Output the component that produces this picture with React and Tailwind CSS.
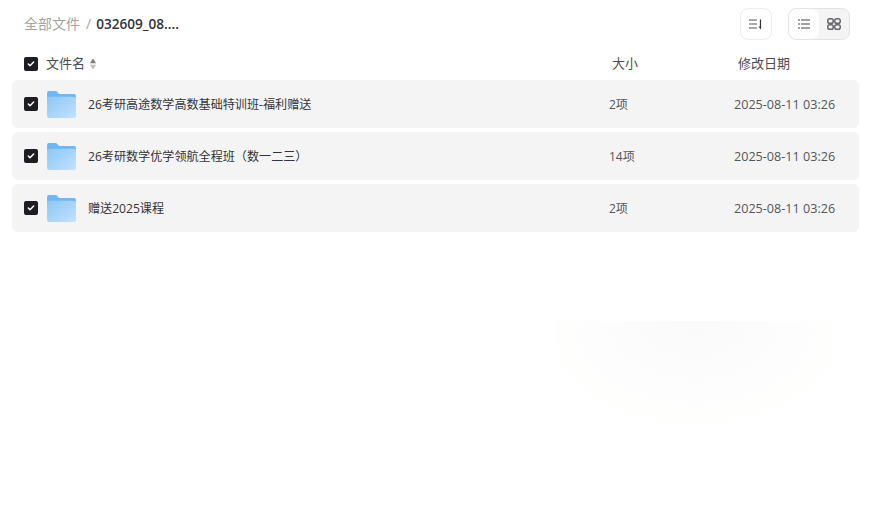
import { Check } from "lucide-react";

const files = [
  { name: "26考研高途数学高数基础特训班-福利赠送", size: "2项" },
  { name: "26考研数学优学领航全程班（数一二三）", size: "14项" },
  { name: "赠送2025课程", size: "2项" },
];

const font = "font-['Open_Sans','Noto_Sans_CJK_SC',sans-serif]";

function CheckBox() {
  return (
    <span className="w-[14px] h-[14px] rounded-[2px] bg-[#1c1c22] flex items-center justify-center shrink-0">
      <Check size={8} strokeWidth={4.500} color="#fff" />
    </span>
  );
}

function FolderIcon() {
  return (
    <svg width="29" height="27" viewBox="0 0 30 28" className="shrink-0 block">
      <defs>
        <linearGradient id="folderFront" x1="0" y1="0" x2="1" y2="1">
          <stop offset="0" stopColor="#8cc6f8" />
          <stop offset="1" stopColor="#c2e2fc" />
        </linearGradient>
      </defs>
      <path d="M0 2a2 2 0 0 1 2-2h7.500l3 3H28a2 2 0 0 1 2 2v4H0z" fill="#6fb6f2" />
      <path d="M0 6h28a2 2 0 0 1 2 2v18a2 2 0 0 1-2 2H2a2 2 0 0 1-2-2z" fill="url(#folderFront)" />
      <rect x="22" y="9" width="3" height="2" fill="#a0d0f6" />
    </svg>
  );
}

function SortIcon() {
  return (
    <svg width="14" height="14" viewBox="0 0 14 14" fill="none" stroke="#55555c" strokeWidth="1.200">
      <path d="M0 3h8M0 7h8M0 11h8" />
      <path d="M11.500 2.500v9" strokeWidth="1.200" stroke="#33333b" />
      <path d="M9.500 9.500h2.500v3z" fill="#33333b" stroke="none" />
    </svg>
  );
}

function ListIcon() {
  return (
    <svg width="14" height="14" viewBox="0 0 14 14" fill="none" stroke="#44444b" strokeWidth="1.100">
      <path d="M1 3h2M1 7h2M1 11h2M4 3H13M4 7H13M4 11H13" />
    </svg>
  );
}

function GridIcon() {
  return (
    <svg width="14" height="14" viewBox="0 0 14 14" fill="none" stroke="#66666c" strokeWidth="1.500">
      <rect x=".8" y="1.800" width="5.400" height="4.400" rx="1.800" />
      <rect x="7.800" y="1.800" width="5.400" height="4.400" rx="1.800" />
      <rect x=".8" y="7.800" width="5.400" height="4.400" rx="1.800" />
      <rect x="7.800" y="7.800" width="5.400" height="4.400" rx="1.800" />
    </svg>
  );
}

export default function App() {
  return (
    <div className={`relative h-[514px] w-[874px] overflow-hidden bg-white ${font}`}>
      {/* watermark samar di bawah */}
      <div className="absolute left-[555px] top-[321px] w-[280px] h-[105px] pointer-events-none bg-[radial-gradient(ellipse_155px_108px_at_50%_0%,#fafafa_0%,#fbfbfb_25%,#fcfcfc_45%,#fdfdfd_65%,#fefefd_90%,#ffffff_100%)]" />

      {/* header */}
      <div className="relative flex items-center h-12 pl-6 pr-6">
        <div className="flex items-center text-sm">
          <span className="text-[#a3a3a3]">全部文件</span>
          <span className="text-[#a3a3a3] ml-[6px] mr-[5px]">/</span>
          <span className="text-[#33333b] text-[13.600px] font-semibold">032609_08....</span>
        </div>
        <div className="ml-auto flex items-center gap-4">
          <button className="w-8 h-8 rounded-lg border border-[#ececec] flex items-center justify-center">
            <SortIcon />
          </button>
          <div className="flex h-8 w-[62px] rounded-lg border border-[#e4e4e4] bg-[#f4f4f4] overflow-hidden">
            <button className="w-[30px] bg-white rounded-lg flex items-center justify-center">
              <ListIcon />
            </button>
            <button className="flex-1 flex items-center justify-center">
              <GridIcon />
            </button>
          </div>
        </div>
      </div>

      {/* kolom */}
      <div className="relative flex items-center h-8 pl-6 text-[13px] text-[#4b4b53]">
        <CheckBox />
        <span className="ml-2">文件名</span>
        <svg width="6" height="10" viewBox="0 0 6 10" className="ml-[5px]">
          <path d="M3 0Q3.500 0 4 .8L6 4.300H0L2 .8Q2.500 0 3 0z" fill="#808080" />
          <path d="M3 10Q2.500 10 2 9.200L0 5.700H6L4 9.200Q3.500 10 3 10z" fill="#bdbdbd" />
        </svg>
        <span className="absolute left-[612px]">大小</span>
        <span className="absolute left-[738px]">修改日期</span>
      </div>

      {/* daftar file */}
      <div className="relative flex flex-col gap-1 mx-3 w-[847px]">
        {files.map((file) => (
          <div key={file.name} className="flex items-center h-12 pl-3 rounded-md bg-[#f4f4f4] text-xs text-[#33333b]">
            <CheckBox />
            <span className="ml-[9px] mt-[1px]">
              <FolderIcon />
            </span>
            <span className="ml-[12px] mt-[2px] w-[521px] text-[12.100px]">{file.name}</span>
            <span className="w-[125px] mt-[2px] text-[#55555c]">{file.size}</span>
            <span className="mt-[2px] text-[12.600px] text-[#55555c]">2025-08-11 03:26</span>
          </div>
        ))}
      </div>
    </div>
  );
}
